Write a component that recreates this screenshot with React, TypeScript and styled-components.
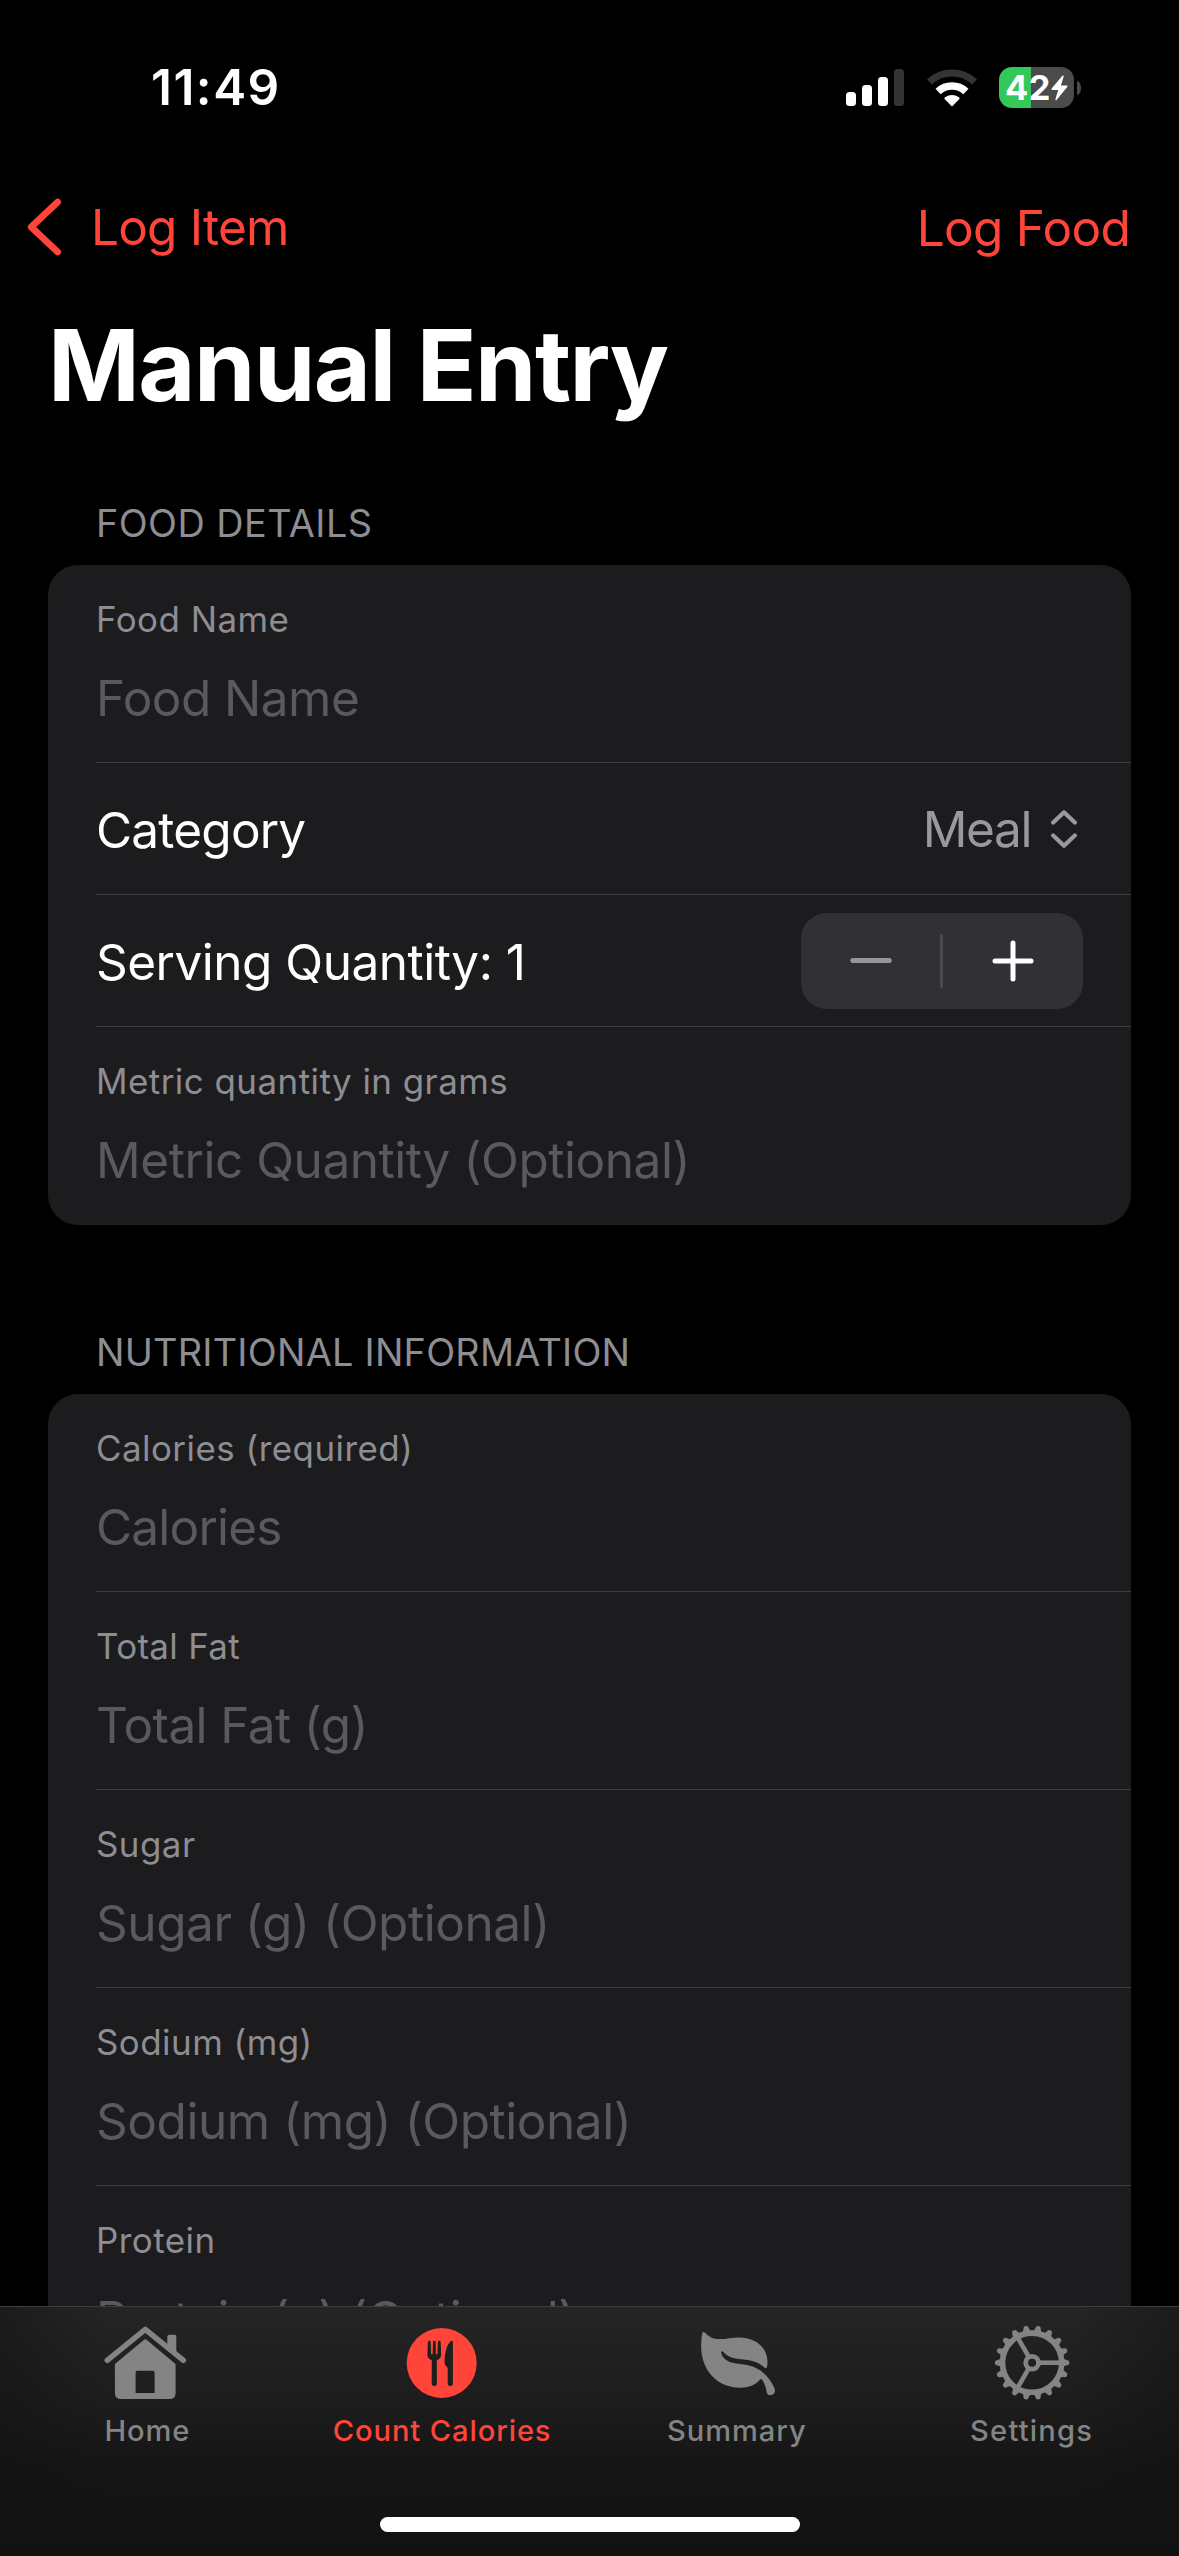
import React from "react";
import styled, { createGlobalStyle } from "styled-components";

const accent = "#ff453a";

const GlobalStyle = createGlobalStyle`
  * { box-sizing: border-box; }
  html, body { margin: 0; padding: 0; background: #000; }
  body { font-family: Inter, "Liberation Sans", sans-serif; color: #fff; }
`;

const Screen = styled.div`
  width: 1179px;
  height: 2556px;
  display: flex;
  flex-direction: column;
  overflow: hidden;
  background: #000;
`;

const Text = styled.span<{ $track?: number }>`
  white-space: nowrap;
  letter-spacing: ${(p) => p.$track ?? 0}px;
`;

/* Status bar */
const StatusBar = styled.div`
  flex: none;
  height: 175px;
  padding: 0 98px 0 151px;
  display: flex;
  align-items: center;
  justify-content: space-between;
`;

const Time = styled(Text)`
  font-size: 49.5px;
  line-height: 55px;
  font-weight: 600;
`;

const StatusIcons = styled.div`
  display: flex;
  align-items: center;
`;

const Bars = styled.div`
  display: flex;
  align-items: flex-end;
  gap: 6px;
  height: 37px;
  margin-right: 22px;
`;

const Bar = styled.div<{ $h: number; $dim?: boolean }>`
  width: 10px;
  height: ${(p) => p.$h}px;
  border-radius: 3.5px;
  background: ${(p) => (p.$dim ? "#343434" : "#fff")};
`;

const Battery = styled.div`
  width: 75px;
  height: 41px;
  margin-left: 21px;
  padding-left: 6px;
  border-radius: 13px;
  background: linear-gradient(90deg, #34c759 32px, #4b4b4b 32px);
  display: flex;
  align-items: center;
`;

const BatteryLevel = styled(Text)`
  font-size: 34.4px;
  line-height: 41px;
  font-weight: 700;
`;

const BatteryTip = styled.div`
  width: 4px;
  height: 14px;
  margin-left: 3px;
  border-radius: 0 4px 4px 0 / 0 7px 7px 0;
  background: #4b4b4b;
`;

/* Navigation */
const NavBar = styled.nav`
  flex: none;
  height: 104px;
  padding: 0 49px 0 26px;
  display: flex;
  align-items: center;
  justify-content: space-between;
  color: ${accent};
  font-size: 49.5px;
  line-height: 60px;
`;

const Back = styled.div`
  display: flex;
  align-items: center;
  gap: 27px;
`;

const NavAction = styled(Text)`
  padding-top: 2px;
`;

const Title = styled.h1`
  flex: none;
  margin: 26px 0 0;
  padding-left: 48px;
  font-size: 98.6px;
  line-height: 120px;
  font-weight: 700;
  white-space: nowrap;
  letter-spacing: -1.5px;
`;

/* Form */
const Form = styled.main`
  flex: 1;
  min-height: 0;
  overflow: hidden;
  padding: 75px 48px 0;
  display: flex;
  flex-direction: column;
  gap: 104px;
`;

const Section = styled.section`
  flex: none;
`;

const SectionHeader = styled.h2`
  margin: 0;
  padding: 0 0 19px 48px;
  font-size: 37.8px;
  line-height: 46px;
  font-weight: 400;
  color: #8d8d93;
`;

const Card = styled.div`
  padding-left: 48px;
  border-radius: 30px;
  background: #1c1c1e;
`;

const Row = styled.div`
  border-bottom: 1px solid #3d3d41;
  &:last-child {
    border-bottom-color: transparent;
  }
`;

const FieldRow = styled(Row)`
  height: 198px;
  padding-top: 33px;
  display: flex;
  flex-direction: column;
  gap: 28px;
`;

const Label = styled(Text)`
  font-size: 34.9px;
  line-height: 42px;
  color: #8d8d93;
`;

const Placeholder = styled(Text)`
  font-size: 49.5px;
  line-height: 60px;
  color: #59595e;
`;

const ControlRow = styled(Row)`
  height: 132px;
  padding: 1px 48px 0 0;
  display: flex;
  align-items: center;
  justify-content: space-between;
`;

const ControlLabel = styled(Text)`
  padding-top: 2px;
  font-size: 49.5px;
  line-height: 60px;
`;

const Picker = styled.div`
  padding-right: 6px;
  display: flex;
  align-items: center;
  gap: 20px;
  font-size: 49.5px;
  line-height: 60px;
  color: #98989f;
`;

const Stepper = styled.div`
  width: 282px;
  height: 96px;
  border-radius: 26px;
  background: #313135;
  display: grid;
  grid-template-columns: 139px 3px 1fr;
  align-items: center;
  justify-items: center;
`;

const StepperDivider = styled.div`
  width: 3px;
  height: 54px;
  border-radius: 2px;
  background: #4b4b50;
`;

/* Tab bar */
const TabBar = styled.footer`
  flex: none;
  height: 250px;
  border-top: 1px solid #3e3e40;
  background: linear-gradient(90deg, rgba(18, 18, 18, 0.5), rgba(18, 18, 18, 0) 9%, rgba(18, 18, 18, 0) 91%, rgba(18, 18, 18, 0.5)),
    linear-gradient(180deg, #252526 0%, #1d1d1d 35%, #151515 65%, #121212 100%);
  display: flex;
  flex-direction: column;
  align-items: center;
`;

const Tabs = styled.div`
  width: 100%;
  height: 210px;
  padding-top: 11px;
  display: grid;
  grid-template-columns: repeat(4, 1fr);
`;

const Tab = styled.div<{ $active?: boolean }>`
  display: flex;
  flex-direction: column;
  align-items: center;
  gap: 5px;
  color: ${(p) => (p.$active ? accent : "#848484")};
`;

const TabLabel = styled(Text)`
  font-size: 29.1px;
  line-height: 36px;
  font-weight: 500;
`;

const HomeIndicator = styled.div`
  width: 420px;
  height: 15px;
  border-radius: 8px;
  background: #fff;
`;

const WifiIcon = () => (
  <svg width="52" height="38" viewBox="0 0 52 38" fill="none">
    <path d="M3.4 12.8A33.5 33.5 0 0 1 48.6 12.8" stroke="#343434" strokeWidth="7" />
    <path d="M12.1 22.5A20.5 20.5 0 0 1 39.9 22.5" stroke="#fff" strokeWidth="7.6" />
    <path d="M26 37.5L18.6 30.1Q17.8 29 19 28.2Q26 23.6 33 28.2Q34.2 29 33.4 30.1Z" fill="#fff" />
  </svg>
);

const BoltIcon = () => (
  <svg width="17" height="26" viewBox="0 0 17 26" fill="#fff">
    <path d="M11.6 0.6L0.6 13.6Q0 14.8 1.2 14.9H7.2L4.4 24.2Q4.4 25.8 5.6 25L16.4 11.8Q17 10.7 15.8 10.6H9.9L12.7 1.4Q12.7 0 11.6 0.6Z" />
  </svg>
);

const BackIcon = () => (
  <svg width="38" height="60" viewBox="0 0 38 60" fill="none" stroke={accent} strokeWidth="6.6" strokeLinecap="round" strokeLinejoin="round">
    <path d="M31.7 5L5.2 30L31.7 55" />
  </svg>
);

const UpDownIcon = () => (
  <svg width="26" height="40" viewBox="0 0 26 40" fill="none" stroke="#98989f" strokeWidth="4.2" strokeLinecap="round" strokeLinejoin="round">
    <path d="M2.2 13.6L13 3.2L23.8 13.6M2.2 26.4L13 36.8L23.8 26.4" />
  </svg>
);

const MinusIcon = () => (
  <svg width="42" height="42" viewBox="0 0 42 42" stroke="#97979b" strokeWidth="5" strokeLinecap="round">
    <path d="M2.8 20.5H39.2" />
  </svg>
);

const PlusIcon = () => (
  <svg width="42" height="42" viewBox="0 0 42 42" stroke="#fff" strokeWidth="5" strokeLinecap="round">
    <path d="M3 21H39M21 3V39" />
  </svg>
);

const HomeIcon = () => (
  <svg width="90" height="90" viewBox="0 0 90 90" fill="currentColor">
    <path d="M5.2 42.4L43.3 11.4L81.4 42.4" fill="none" stroke="currentColor" strokeWidth="5.4" strokeLinecap="round" strokeLinejoin="round" />
    <path d="M65.3 30V18.7Q65.3 16.7 67.3 16.7H72.3Q74.3 16.7 74.3 18.7V38Z" />
    <path
      fillRule="evenodd"
      d="M43.3 21.3Q44 21.3 44.8 22L73.6 46V75Q73.6 81 67.6 81H18.9Q12.9 81 12.9 75V46L41.8 22Q42.6 21.3 43.3 21.3ZM35.4 52.7Q33.6 52.7 33.6 54.5V75H52.6V54.5Q52.6 52.7 50.8 52.7Z"
    />
  </svg>
);

const ForkKnifeIcon = () => (
  <svg width="90" height="90" viewBox="0 0 90 90">
    <circle cx="44.7" cy="45" r="35" fill="currentColor" />
    <g fill="#1e1e1e">
      <path d="M32.2 22.8Q33.7 22.8 33.7 24.2L34.1 36.2H35.7L36 24.2Q36 22.8 37.3 22.8Q38.6 22.8 38.6 24.2L38.9 36.2H40.5L40.9 24.2Q40.9 22.8 42.3 22.8Q43.7 22.8 43.7 24.2L44.2 37Q44.2 40.4 39.8 42.3L39.9 65.5Q39.9 68 37.3 68Q34.7 68 34.7 65.5L34.8 42.3Q30.4 40.4 30.4 37L30.9 24.2Q30.9 22.8 32.2 22.8Z" />
      <path d="M55.9 24Q55.9 22.2 54 23C50.4 25.4 47.5 34 47.6 45Q47.7 47.3 49.3 48.2Q50.7 49 50.7 51V65.5Q50.8 68 53.3 68Q55.9 68 55.9 65.5Z" />
    </g>
  </svg>
);

const LeafIcon = () => (
  <svg width="90" height="90" viewBox="0 0 90 90" fill="currentColor">
    <path d="M10.2 15.4Q11 13 13.4 14.9C17 18.8 20.5 20.9 28.1 21.1C34.5 21.2 39.5 19.2 47.4 19.4C64 19.6 74.6 29.4 75.4 42Q75.6 46 75 49Q74.4 51 72.4 49.5C66.4 44 59 42.2 49.8 41.3C41.4 40.5 35.4 38.8 31.2 33.7Q29.6 32.4 29.1 34.2C29.8 39 34.4 43.6 41.8 45.1C48.4 46.3 56.4 46.5 63.4 49.8C73.4 54.4 78.4 61.6 82.5 70.2Q84 75 80.8 76.6Q76.2 78.6 74.9 74.9C74.2 70.4 72.8 66 70 61.6Q69.1 60.6 68 61.6C63.4 67.3 57 69.8 47.8 69.8C24.6 69.3 9.2 52 9.1 28Q9.1 20.4 10.2 15.4Z" />
  </svg>
);

const teeth = Array.from({ length: 18 }, (_, i) => i * 20);

const GearIcon = () => (
  <svg width="90" height="90" viewBox="0 0 90 90" fill="none" stroke="currentColor">
    <g transform="translate(45.1 44.7)">
      <circle r="29.6" strokeWidth="5.6" />
      <circle r="6.4" strokeWidth="4.8" />
      {[0, 120, 240].map((a) => (
        <path key={a} d="M7.5 0H28" strokeWidth="4.6" transform={`rotate(${a})`} />
      ))}
      {teeth.map((a) => (
        <path key={a} d="M30.5 -4.4Q33 -3 36 -2.3Q37.3 -1.9 37.3 0Q37.3 1.9 36 2.3Q33 3 30.5 4.4Z" fill="currentColor" stroke="none" transform={`rotate(${a})`} />
      ))}
    </g>
  </svg>
);

type FieldProps = { label: string; hint: string; labelTrack?: number; hintTrack?: number };

const Field = ({ label, hint, labelTrack = 0.48, hintTrack = -0.45 }: FieldProps) => (
  <FieldRow>
    <Label $track={labelTrack}>{label}</Label>
    <Placeholder $track={hintTrack}>{hint}</Placeholder>
  </FieldRow>
);

const nutrients: FieldProps[] = [
  { label: "Calories (required)", hint: "Calories", hintTrack: -0.8 },
  { label: "Total Fat", hint: "Total Fat (g)", labelTrack: 0.35, hintTrack: -0.6 },
  { label: "Sugar", hint: "Sugar (g) (Optional)" },
  { label: "Sodium (mg)", hint: "Sodium (mg) (Optional)" },
  { label: "Protein", hint: "Protein (g) (Optional)" },
];

export default function App() {
  return (
    <>
      <GlobalStyle />
      <Screen>
        <StatusBar>
          <Time $track={1.5}>11:49</Time>
          <StatusIcons>
            <Bars>
              <Bar $h={14} />
              <Bar $h={21} />
              <Bar $h={29} />
              <Bar $h={37} $dim />
            </Bars>
            <WifiIcon />
            <Battery>
              <BatteryLevel $track={0.6}>42</BatteryLevel>
              <BoltIcon />
            </Battery>
            <BatteryTip />
          </StatusIcons>
        </StatusBar>
        <NavBar>
          <Back>
            <BackIcon />
            <Text $track={-0.8}>Log Item</Text>
          </Back>
          <NavAction $track={-0.7}>Log Food</NavAction>
        </NavBar>
        <Title>Manual Entry</Title>
        <Form>
          <Section>
            <SectionHeader>
              <Text $track={0.45}>FOOD DETAILS</Text>
            </SectionHeader>
            <Card>
              <Field label="Food Name" hint="Food Name" hintTrack={-0.55} />
              <ControlRow>
                <ControlLabel $track={-0.8}>Category</ControlLabel>
                <Picker>
                  <Text $track={-1.4}>Meal</Text>
                  <UpDownIcon />
                </Picker>
              </ControlRow>
              <ControlRow>
                <ControlLabel $track={-0.5}>Serving Quantity: 1</ControlLabel>
                <Stepper>
                  <MinusIcon />
                  <StepperDivider />
                  <PlusIcon />
                </Stepper>
              </ControlRow>
              <Field label="Metric quantity in grams" hint="Metric Quantity (Optional)" />
            </Card>
          </Section>
          <Section>
            <SectionHeader>
              <Text $track={0.25}>NUTRITIONAL INFORMATION</Text>
            </SectionHeader>
            <Card>
              {nutrients.map((n) => (
                <Field key={n.label} {...n} />
              ))}
            </Card>
          </Section>
        </Form>
        <TabBar>
          <Tabs>
            <Tab>
              <HomeIcon />
              <TabLabel $track={0.9}>Home</TabLabel>
            </Tab>
            <Tab $active>
              <ForkKnifeIcon />
              <TabLabel $track={0.9}>Count Calories</TabLabel>
            </Tab>
            <Tab>
              <LeafIcon />
              <TabLabel $track={0.95}>Summary</TabLabel>
            </Tab>
            <Tab>
              <GearIcon />
              <TabLabel $track={1.2}>Settings</TabLabel>
            </Tab>
          </Tabs>
          <HomeIndicator />
        </TabBar>
      </Screen>
    </>
  );
}
